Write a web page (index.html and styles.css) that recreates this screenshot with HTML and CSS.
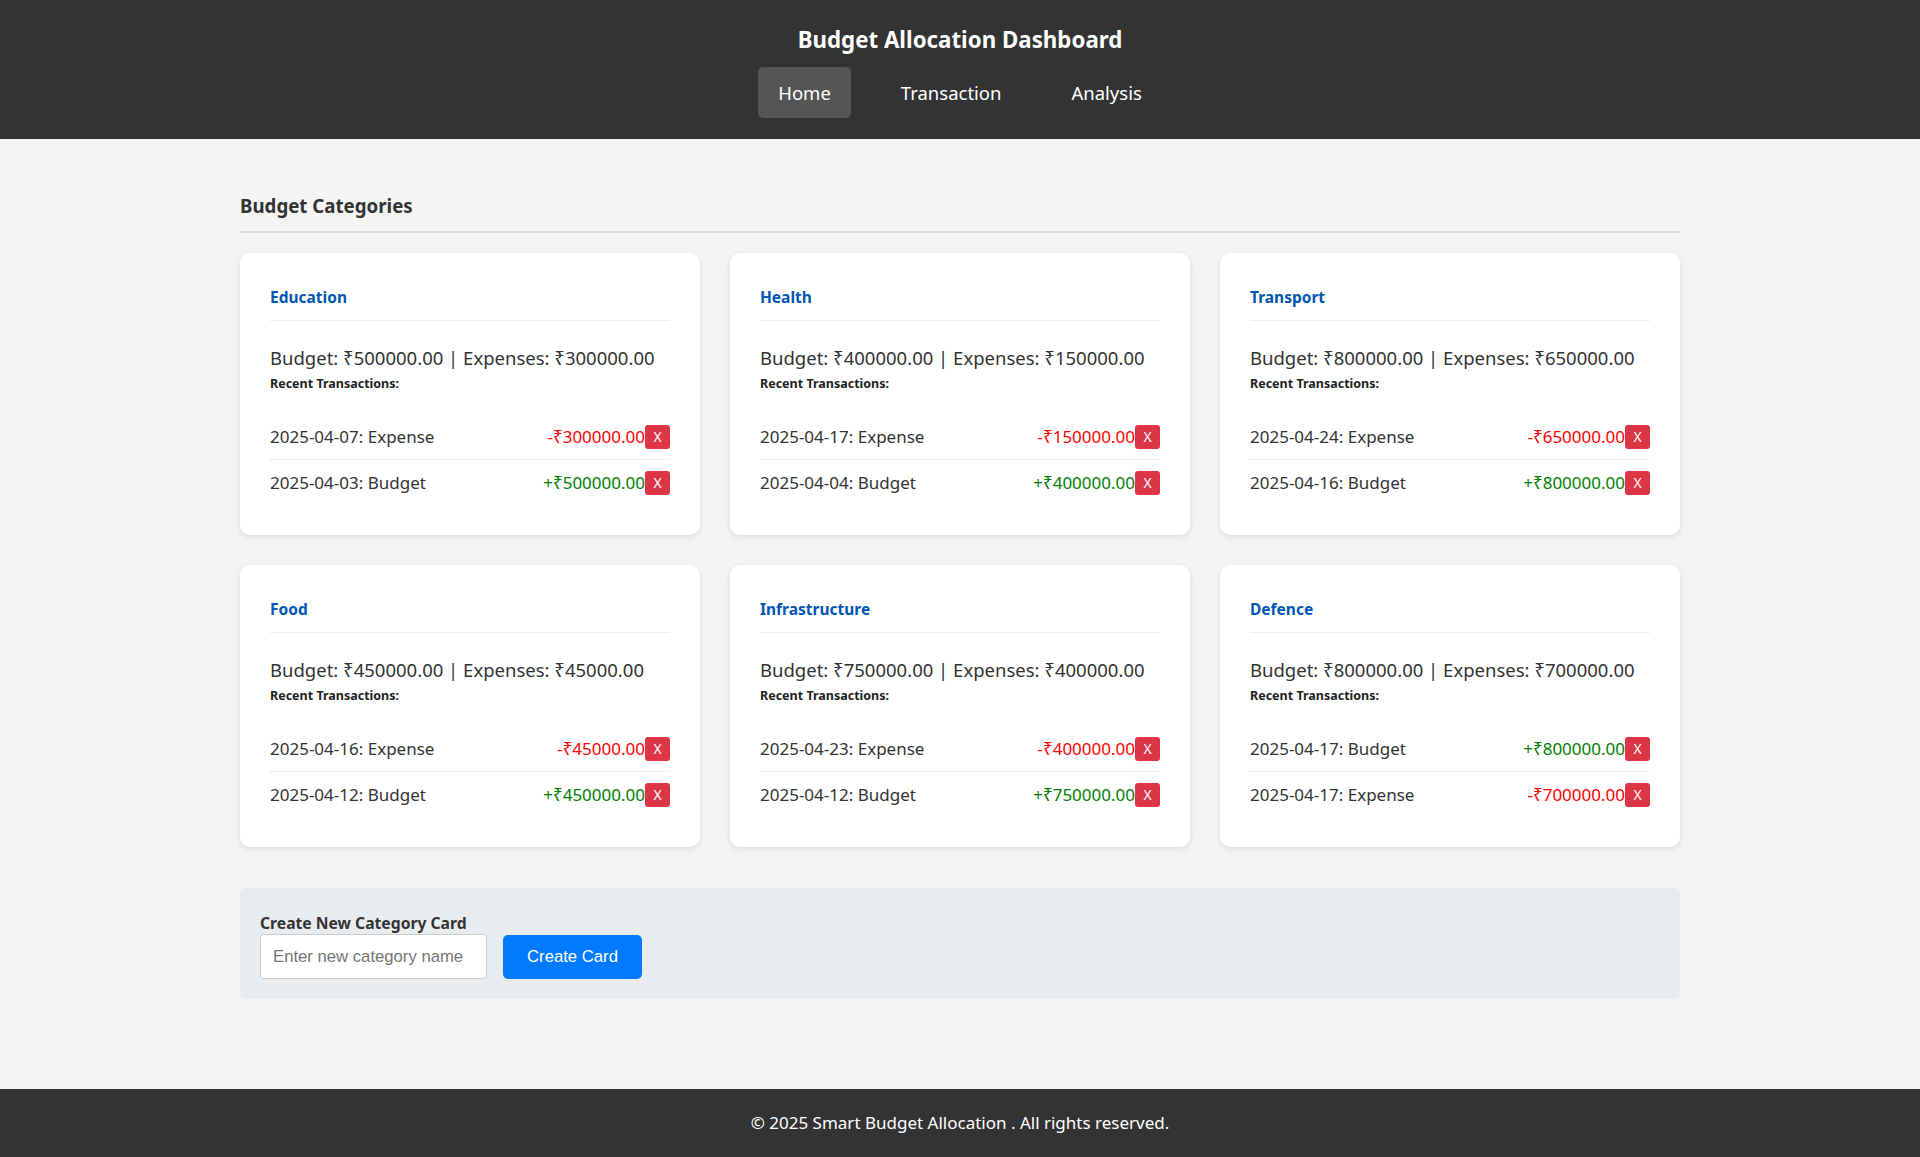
FILE: index.html
```html
<!DOCTYPE html>
<html lang="en">
<head>
<meta charset="utf-8">
<title>Budget Allocation Dashboard</title>
<link rel="stylesheet" href="styles.css">
</head>
<body>
<header class="site-header">
  <h1 class="site-title">Budget Allocation Dashboard</h1>
  <nav class="nav">
    <a class="nav-link active" href="#">Home</a>
    <a class="nav-link" href="#">Transaction</a>
    <a class="nav-link" href="#">Analysis</a>
  </nav>
</header>

<main class="main">
  <h2 class="section-title">Budget Categories</h2>

  <div class="cards">
    <div class="card">
      <h3 class="card-title">Education</h3>
      <p class="summary">Budget: ₹500000.00 | Expenses: ₹300000.00</p>
      <p class="recent">Recent Transactions:</p>
      <ul class="tx-list">
        <li class="tx"><span>2025-04-07: Expense</span><span class="tx-right"><span class="amt neg">-₹300000.00</span><button class="del">X</button></span></li>
        <li class="tx"><span>2025-04-03: Budget</span><span class="tx-right"><span class="amt pos">+₹500000.00</span><button class="del">X</button></span></li>
      </ul>
    </div>
    <div class="card">
      <h3 class="card-title">Health</h3>
      <p class="summary">Budget: ₹400000.00 | Expenses: ₹150000.00</p>
      <p class="recent">Recent Transactions:</p>
      <ul class="tx-list">
        <li class="tx"><span>2025-04-17: Expense</span><span class="tx-right"><span class="amt neg">-₹150000.00</span><button class="del">X</button></span></li>
        <li class="tx"><span>2025-04-04: Budget</span><span class="tx-right"><span class="amt pos">+₹400000.00</span><button class="del">X</button></span></li>
      </ul>
    </div>
    <div class="card">
      <h3 class="card-title">Transport</h3>
      <p class="summary">Budget: ₹800000.00 | Expenses: ₹650000.00</p>
      <p class="recent">Recent Transactions:</p>
      <ul class="tx-list">
        <li class="tx"><span>2025-04-24: Expense</span><span class="tx-right"><span class="amt neg">-₹650000.00</span><button class="del">X</button></span></li>
        <li class="tx"><span>2025-04-16: Budget</span><span class="tx-right"><span class="amt pos">+₹800000.00</span><button class="del">X</button></span></li>
      </ul>
    </div>
    <div class="card">
      <h3 class="card-title">Food</h3>
      <p class="summary">Budget: ₹450000.00 | Expenses: ₹45000.00</p>
      <p class="recent">Recent Transactions:</p>
      <ul class="tx-list">
        <li class="tx"><span>2025-04-16: Expense</span><span class="tx-right"><span class="amt neg">-₹45000.00</span><button class="del">X</button></span></li>
        <li class="tx"><span>2025-04-12: Budget</span><span class="tx-right"><span class="amt pos">+₹450000.00</span><button class="del">X</button></span></li>
      </ul>
    </div>
    <div class="card">
      <h3 class="card-title">Infrastructure</h3>
      <p class="summary">Budget: ₹750000.00 | Expenses: ₹400000.00</p>
      <p class="recent">Recent Transactions:</p>
      <ul class="tx-list">
        <li class="tx"><span>2025-04-23: Expense</span><span class="tx-right"><span class="amt neg">-₹400000.00</span><button class="del">X</button></span></li>
        <li class="tx"><span>2025-04-12: Budget</span><span class="tx-right"><span class="amt pos">+₹750000.00</span><button class="del">X</button></span></li>
      </ul>
    </div>
    <div class="card">
      <h3 class="card-title">Defence</h3>
      <p class="summary">Budget: ₹800000.00 | Expenses: ₹700000.00</p>
      <p class="recent">Recent Transactions:</p>
      <ul class="tx-list">
        <li class="tx"><span>2025-04-17: Budget</span><span class="tx-right"><span class="amt pos">+₹800000.00</span><button class="del">X</button></span></li>
        <li class="tx"><span>2025-04-17: Expense</span><span class="tx-right"><span class="amt neg">-₹700000.00</span><button class="del">X</button></span></li>
      </ul>
    </div>
  </div>

  <section class="create">
    <h4 class="create-title">Create New Category Card</h4>
    <div class="create-row">
      <input class="create-input" type="text" placeholder="Enter new category name">
      <button class="create-btn">Create Card</button>
    </div>
  </section>
</main>

<footer class="site-footer">
  <p class="footer-text">© 2025 Smart Budget Allocation . All rights reserved.</p>
</footer>
</body>
</html>
```

FILE: styles.css
```css
* { box-sizing: border-box; }

html, body { height: 100%; }

body {
  margin: 0;
  min-height: 100vh;
  display: flex;
  flex-direction: column;
  background: #f4f4f4;
  color: #333;
  font-family: "Noto Sans", "Open Sans", "DejaVu Sans", sans-serif;
}

.site-header {
  background: #333;
  color: #fff;
  padding: 24px 0 21px;
  display: flex;
  flex-direction: column;
  align-items: center;
}

.site-title {
  margin: 0;
  font-size: 22.3px;
  line-height: 32px;
  font-weight: 700;
}

.nav {
  margin-top: 11px;
  display: flex;
  gap: 30px;
}

.nav-link {
  color: #fff;
  text-decoration: none;
  font-size: 18.5px;
  line-height: 27px;
  padding: 12px 20px;
  border-radius: 5px;
}

.nav-link.active { background: #555; }

.main {
  flex: 1;
  width: 1440px;
  margin: 0 auto;
  padding-top: 53px;
}

.section-title {
  margin: 0;
  font-size: 18.7px;
  line-height: 28px;
  font-weight: 700;
  padding-bottom: 11px;
  border-bottom: 2px solid #ddd;
}

.cards {
  margin-top: 20px;
  display: grid;
  grid-template-columns: repeat(3, 1fr);
  gap: 30px;
}

.card {
  background: #fff;
  border-radius: 10px;
  box-shadow: 0 2px 6px rgba(0, 0, 0, 0.1);
  padding: 30px;
}

.card-title {
  margin: 2px 0 0;
  font-size: 15.5px;
  line-height: 24px;
  font-weight: 700;
  color: #0056b3;
  padding-bottom: 11px;
  border-bottom: 1px solid #eee;
}

.summary {
  margin: 24px 0 0;
  font-size: 18.5px;
  line-height: 26px;
}

.recent {
  margin: 4px 0 0;
  font-size: 12.5px;
  line-height: 18px;
  font-weight: 700;
  color: #222;
}

.tx-list {
  list-style: none;
  margin: 21px 0 0;
  padding: 0;
}

.tx {
  display: flex;
  justify-content: space-between;
  align-items: center;
  padding: 10px 0;
  font-size: 17px;
  line-height: 25px;
  border-bottom: 1px dotted #e2e2e2;
}

.tx:last-child { border-bottom: none; }

.tx-right {
  display: flex;
  align-items: center;
}

.amt.neg { color: #ff0000; }
.amt.pos { color: #008000; }

.del {
  width: 25px;
  height: 24px;
  padding: 0;
  border: none;
  border-radius: 3px;
  background: #dc3545;
  color: #fff;
  font-family: "Noto Sans", "Open Sans", sans-serif;
  font-size: 14px;
  line-height: 24px;
  cursor: pointer;
}

.create {
  margin-top: 41px;
  background: #e9ecef;
  border-radius: 5px;
  padding: 24px 20px 20px;
}

.create-title {
  margin: 0;
  font-size: 15.7px;
  line-height: 22px;
  font-weight: 700;
}

.create-row {
  display: flex;
  align-items: center;
  gap: 16px;
}

.create-input {
  width: 227px;
  height: 45px;
  padding: 10px 12px;
  border: 1px solid #ccc;
  border-radius: 4px;
  font-family: "Liberation Sans", Arial, sans-serif;
  font-size: 16.7px;
  color: #333;
}

.create-input::placeholder { color: #757575; }

.create-btn {
  width: 139px;
  height: 44px;
  border: none;
  border-radius: 5px;
  background: #007bff;
  color: #fff;
  font-family: "Liberation Sans", Arial, sans-serif;
  font-size: 16.7px;
  cursor: pointer;
}

.site-footer {
  background: #333;
  color: #fff;
  height: 68px;
  display: flex;
  align-items: center;
  justify-content: center;
}

.footer-text {
  margin: 0;
  font-size: 17px;
  line-height: 24px;
}
```
